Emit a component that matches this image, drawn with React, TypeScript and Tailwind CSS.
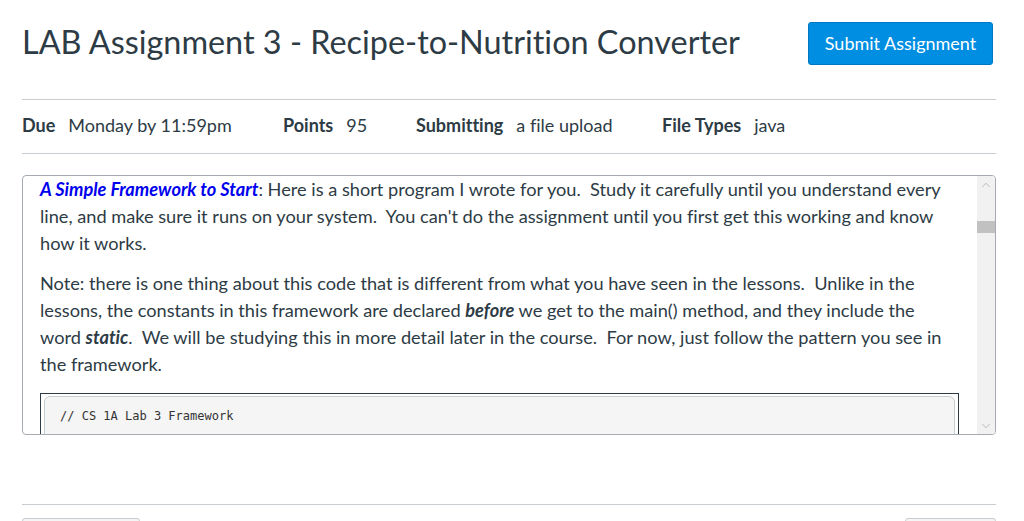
import { ChevronUp, ChevronDown } from 'lucide-react';

const details = [
  { label: 'Due', value: 'Monday by 11:59pm', w: 'w-[261px]' },
  { label: 'Points', value: '95', w: 'w-[133px]' },
  { label: 'Submitting', value: 'a file upload', w: 'w-[246px]' },
  { label: 'File Types', value: 'java', w: '' },
];

export default function App() {
  return (
    <div className="min-h-[521px] bg-white font-['Lato','Liberation_Sans',sans-serif] text-[#2d3b45] [font-variant-ligatures:none]">
      <div className="ml-[22px] w-[974px]">
        {/* header */}
        <div className="flex items-start justify-between pt-[22px]">
          <h1 className="text-[32.4px] leading-[40px] font-normal">
            LAB Assignment 3 - Recipe-to-Nutrition Converter
          </h1>
          <button className="mr-[3px] h-[43px] w-[185px] rounded-[3px] border border-[#0077c2] bg-[#008ee2] text-[18px] text-white">
            Submit Assignment
          </button>
        </div>

        {/* details */}
        <div className="mt-[34px] flex h-[55px] items-center border-y border-[#c7cdd1] pb-[3px] text-[18px]">
          {details.map((d) => (
            <div key={d.label} className={`flex ${d.w}`}>
              <span className="mr-[13px] font-bold">{d.label}</span>
              <span>{d.value}</span>
            </div>
          ))}
        </div>

        {/* description box */}
        <div className="mt-[21px] flex h-[260px] overflow-hidden rounded-[4px] border border-[#a5abb0]">
          <div className="flex-1 overflow-hidden pl-[17px] pr-[24px] text-[18.2px] leading-[27px]">
            <p>
              <strong className="italic text-[#0000ee]">A Simple Framework to Start</strong>: Here is a
              short program I wrote for you.{'\u00a0'} Study it carefully until you understand every line,
              and make sure it runs on your system.{'\u00a0'} You can't do the assignment until you first
              get this working and know how it works.
            </p>
            <p className="mt-[13px]">
              Note: there is one thing about this code that is different from what you have seen in the
              lessons.{'\u00a0'} Unlike in the lessons, the constants in this framework are declared{' '}
              <strong className="italic">before</strong> we get to the main() method, and they include the
              word <strong className="italic">static</strong>.{'\u00a0'} We will be studying this in more
              detail later in the course.{'\u00a0'} For now, just follow the pattern you see in the
              framework.
            </p>
            <div className="mt-[15px] -mr-[6px] border border-[#2d3b45] px-[3px] pt-[2px]">
              <pre className="h-[120px] rounded-t-[6px] border border-[#c7cdd1] bg-[#f5f5f5] px-[15px] pt-[11px] font-['DejaVu_Sans_Mono',monospace] text-[12px] leading-[16px] text-[#333]">
                // CS 1A Lab 3 Framework
              </pre>
            </div>
          </div>
          <div className="flex w-[18px] flex-col bg-[#f1f1f1]">
            <div className="flex h-[17px] items-center justify-center text-[#a3a3a3]">
              <ChevronUp size={14} strokeWidth={1.2} />
            </div>
            <div className="mt-[28px] h-[12px] bg-[#c1c1c1]" />
            <div className="flex-1" />
            <div className="flex h-[17px] items-center justify-center text-[#a3a3a3]">
              <ChevronDown size={14} strokeWidth={1.2} />
            </div>
          </div>
        </div>

        {/* footer */}
        <div className="mt-[69px] border-t border-[#c7cdd1] pt-[13px]">
          <div className="flex justify-between">
            <div className="h-[30px] w-[118px] rounded-[3px] border border-[#c7cdd1] bg-[#f5f5f5]" />
            <div className="h-[30px] w-[91px] rounded-[3px] border border-[#c7cdd1] bg-[#f5f5f5]" />
          </div>
        </div>
      </div>
    </div>
  );
}
